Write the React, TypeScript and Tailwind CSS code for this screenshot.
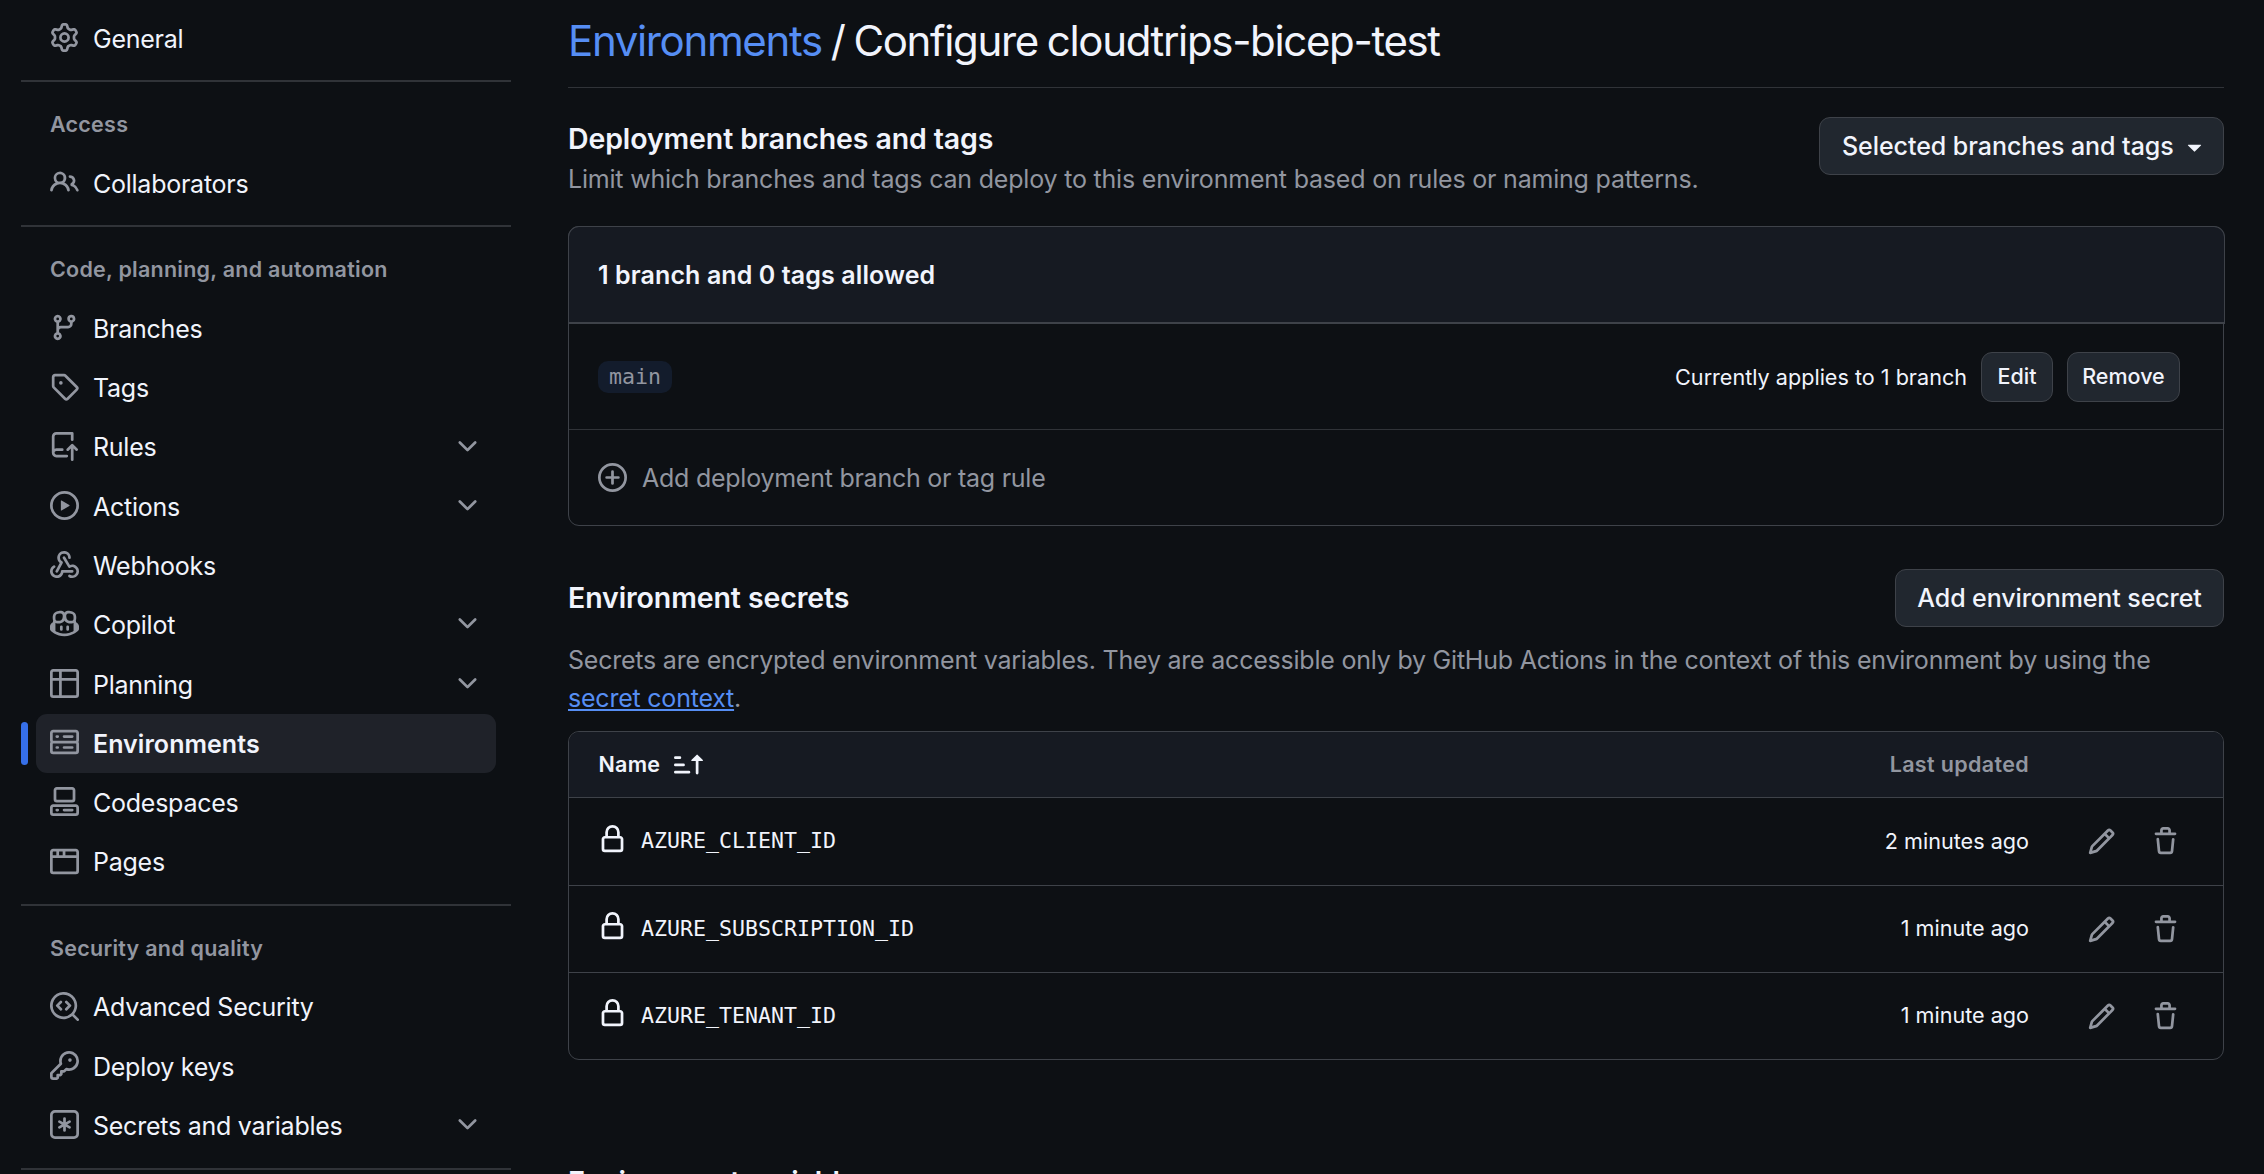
import type { ReactNode } from "react";
import clsx from "clsx";

// 16px glyphs, scaled up by the svg size
const icons = {
  gear: "M8 0a8.2 8.2 0 0 1 .701.031C9.444.095 9.99.645 10.16 1.29l.288 1.107c.018.066.079.158.212.224.231.114.454.243.668.386.123.082.233.09.299.071l1.103-.303c.644-.176 1.392.021 1.82.63.27.385.506.792.704 1.218.315.675.111 1.422-.364 1.891l-.814.806c-.049.048-.098.147-.088.294.016.257.016.515 0 .772-.01.147.038.246.088.294l.814.806c.475.469.679 1.216.364 1.891a7.977 7.977 0 0 1-.704 1.217c-.428.61-1.176.807-1.82.63l-1.102-.302c-.067-.019-.177-.011-.3.071a5.909 5.909 0 0 1-.668.386c-.133.066-.194.158-.211.224l-.29 1.106c-.168.646-.715 1.196-1.458 1.26a8.006 8.006 0 0 1-1.402 0c-.743-.064-1.289-.614-1.458-1.26l-.289-1.106c-.018-.066-.079-.158-.212-.224a5.738 5.738 0 0 1-.668-.386c-.123-.082-.233-.09-.299-.071l-1.103.303c-.644.176-1.392-.021-1.82-.63a8.12 8.12 0 0 1-.704-1.218c-.315-.675-.111-1.422.363-1.891l.815-.806c.05-.048.098-.147.088-.294a6.214 6.214 0 0 1 0-.772c.01-.147-.038-.246-.088-.294l-.815-.806C.635 6.045.431 5.298.746 4.623a7.92 7.92 0 0 1 .704-1.217c.428-.61 1.176-.807 1.82-.63l1.102.302c.067.019.177.011.3-.071.214-.143.437-.272.668-.386.133-.066.194-.158.211-.224l.29-1.106C6.009.645 6.556.095 7.299.03 7.53.01 7.764 0 8 0Zm-.571 1.525c-.036.003-.108.036-.137.146l-.289 1.105c-.147.561-.549.967-.998 1.189-.173.086-.34.183-.5.29-.417.278-.97.423-1.529.27l-1.103-.303c-.109-.03-.175.016-.195.045-.22.312-.412.644-.573.99-.014.031-.021.11.059.19l.815.806c.411.406.562.957.53 1.456a4.709 4.709 0 0 0 0 .582c.032.499-.119 1.05-.53 1.456l-.815.806c-.081.08-.073.159-.059.19.162.346.353.677.573.989.02.03.085.076.195.046l1.102-.303c.56-.153 1.113-.008 1.53.27.161.107.328.204.501.29.447.222.85.629.997 1.189l.289 1.105c.029.109.101.143.137.146a6.6 6.6 0 0 0 1.142 0c.036-.003.108-.036.137-.146l.289-1.105c.147-.561.549-.967.998-1.189.173-.086.34-.183.5-.29.417-.278.97-.423 1.529-.27l1.103.303c.109.029.175-.016.195-.045.22-.313.411-.644.573-.99.014-.031.021-.11-.059-.19l-.815-.806c-.411-.406-.562-.957-.53-1.456a4.709 4.709 0 0 0 0-.582c-.032-.499.119-1.05.53-1.456l.815-.806c.081-.08.073-.159.059-.19a6.464 6.464 0 0 0-.573-.989c-.02-.03-.085-.076-.195-.046l-1.102.303c-.56.153-1.113.008-1.53-.27a4.44 4.44 0 0 0-.501-.29c-.447-.222-.85-.629-.997-1.189l-.289-1.105c-.029-.11-.101-.143-.137-.146a6.6 6.6 0 0 0-1.142 0ZM11 8a3 3 0 1 1-6 0 3 3 0 0 1 6 0ZM9.5 8a1.5 1.5 0 1 0-3.001.001A1.5 1.5 0 0 0 9.5 8Z",
  people:
    "M2 5.5a3.5 3.5 0 1 1 5.898 2.549 5.508 5.508 0 0 1 3.034 4.084.75.75 0 1 1-1.482.235 4 4 0 0 0-7.9 0 .75.75 0 0 1-1.482-.236A5.507 5.507 0 0 1 3.102 8.05 3.493 3.493 0 0 1 2 5.5ZM11 4a3.001 3.001 0 0 1 2.22 5.018 5.01 5.01 0 0 1 2.56 3.012.749.749 0 0 1-.885.954.752.752 0 0 1-.549-.514 3.507 3.507 0 0 0-2.522-2.372.75.75 0 0 1-.574-.73v-.352a.75.75 0 0 1 .416-.672A1.5 1.5 0 0 0 11 5.5.75.75 0 0 1 11 4Zm-5.5-.5a2 2 0 1 0-.001 3.999A2 2 0 0 0 5.5 3.5Z",
  branch:
    "M9.5 3.25a2.25 2.25 0 1 1 3 2.122V6A2.5 2.5 0 0 1 10 8.5H6a1 1 0 0 0-1 1v1.128a2.251 2.251 0 1 1-1.5 0V5.372a2.25 2.25 0 1 1 1.5 0v1.836A2.493 2.493 0 0 1 6 7h4a1 1 0 0 0 1-1v-.628A2.25 2.25 0 0 1 9.5 3.25Zm-6 0a.75.75 0 1 0 1.5 0 .75.75 0 0 0-1.5 0Zm8.25-.75a.75.75 0 1 0 0 1.5.75.75 0 0 0 0-1.5ZM4.25 12a.75.75 0 1 0 0 1.5.75.75 0 0 0 0-1.5Z",
  tag: "M1 7.775V2.75C1 1.784 1.784 1 2.75 1h5.025c.464 0 .91.184 1.238.513l6.25 6.25a1.75 1.75 0 0 1 0 2.474l-5.026 5.026a1.75 1.75 0 0 1-2.474 0l-6.25-6.25A1.752 1.752 0 0 1 1 7.775Zm1.5 0c0 .066.026.13.073.177l6.25 6.25a.25.25 0 0 0 .354 0l5.025-5.025a.25.25 0 0 0 0-.354l-6.25-6.25a.25.25 0 0 0-.177-.073H2.75a.25.25 0 0 0-.25.25ZM6 5a1 1 0 1 1 0 2 1 1 0 0 1 0-2Z",
  repoPush:
    "M1 2.5A2.5 2.5 0 0 1 3.5 0h8.75a.75.75 0 0 1 .75.75v3.5a.75.75 0 0 1-1.5 0V1.5h-8a1 1 0 0 0-1 1v6.708A2.493 2.493 0 0 1 3.5 9h3.25a.75.75 0 0 1 0 1.5H3.5a1 1 0 0 0 0 2h5.75a.75.75 0 0 1 0 1.5H3.5A2.5 2.5 0 0 1 1 11.5Zm13.23 7.79h-.001l-1.224-1.224v6.184a.75.75 0 0 1-1.5 0V9.066L10.28 10.29a.75.75 0 0 1-1.06-1.061l2.505-2.504a.75.75 0 0 1 1.06 0L15.29 9.23a.751.751 0 0 1-.018 1.042.751.751 0 0 1-1.042.018Z",
  play: "M8 0a8 8 0 1 1 0 16A8 8 0 0 1 8 0ZM1.5 8a6.5 6.5 0 1 0 13 0 6.5 6.5 0 0 0-13 0Zm4.879-2.773 4.264 2.559a.25.25 0 0 1 0 .428l-4.264 2.559A.25.25 0 0 1 6 10.559V5.442a.25.25 0 0 1 .379-.215Z",
  webhook:
    "M5.5 4.25a2.25 2.25 0 0 1 4.5 0 .75.75 0 0 0 1.5 0 3.75 3.75 0 1 0-6.14 2.889l-2.272 4.258a.75.75 0 0 0 1.324.706L7 7.25a.75.75 0 0 0-.309-1.015A2.25 2.25 0 0 1 5.5 4.25Z M7.364 3.607a.75.75 0 0 1 1.03.257l2.608 4.349a3.75 3.75 0 1 1-.628 6.785.75.75 0 0 1 .752-1.299 2.25 2.25 0 1 0-.033-3.88.75.75 0 0 1-1.03-.256L7.107 4.636a.75.75 0 0 1 .257-1.03Z M2.9 8.776A.75.75 0 0 1 2.625 9.8 2.25 2.25 0 1 0 6 11.75a.75.75 0 0 1 .75-.751h5.5a.75.75 0 0 1 0 1.5H7.425a3.751 3.751 0 1 1-5.55-3.998.75.75 0 0 1 1.024.274Z",
  copilot:
    "M7.998 15.035c-4.562 0-7.873-2.914-7.998-3.749V9.338c.085-.628.677-1.686 1.588-2.065.013-.07.024-.143.036-.218.029-.183.06-.384.126-.612-.201-.508-.254-1.084-.254-1.656 0-.87.128-1.769.693-2.484.579-.733 1.494-1.124 2.724-1.261 1.206-.134 2.262.034 2.944.765.05.053.096.108.139.165.044-.057.094-.112.143-.165.682-.731 1.738-.899 2.944-.765 1.23.137 2.145.528 2.724 1.261.566.715.693 1.614.693 2.484 0 .572-.053 1.148-.254 1.656.066.228.098.429.126.612.012.076.024.148.037.218.924.385 1.522 1.471 1.591 2.095v1.872c0 .766-3.351 3.795-8.002 3.795Zm0-1.485c2.28 0 4.584-1.11 5.002-1.433V7.862l-.023-.116c-.49.21-1.075.291-1.727.291-1.146 0-2.059-.327-2.71-.991A3.222 3.222 0 0 1 8 6.303a3.24 3.24 0 0 1-.544.743c-.65.664-1.563.991-2.71.991-.652 0-1.236-.081-1.727-.291l-.023.116v4.255c.419.323 2.722 1.433 5.002 1.433ZM6.762 2.83c-.193-.206-.637-.413-1.682-.297-1.019.113-1.479.404-1.713.7-.247.312-.369.789-.369 1.554 0 .793.129 1.171.308 1.371.162.181.519.379 1.442.379.853 0 1.339-.235 1.638-.54.315-.322.527-.827.617-1.553.117-.935-.037-1.395-.241-1.614Zm4.155-.297c-1.044-.116-1.488.091-1.681.297-.204.219-.359.679-.242 1.614.091.726.303 1.231.618 1.553.299.305.784.54 1.638.54.922 0 1.28-.198 1.442-.379.179-.2.308-.578.308-1.371 0-.765-.123-1.242-.37-1.554-.233-.296-.693-.587-1.713-.7Z M6.25 9.037a.75.75 0 0 1 .75.75v1.501a.75.75 0 0 1-1.5 0V9.787a.75.75 0 0 1 .75-.75Zm4.25.75v1.501a.75.75 0 0 1-1.5 0V9.787a.75.75 0 0 1 1.5 0Z",
  table:
    "M0 1.75C0 .784.784 0 1.75 0h12.5C15.216 0 16 .784 16 1.75v12.5A1.75 1.75 0 0 1 14.25 16H1.75A1.75 1.75 0 0 1 0 14.25ZM6.5 6.5v8h7.75a.25.25 0 0 0 .25-.25V6.5Zm8-1.5V1.75a.25.25 0 0 0-.25-.25H6.5V5Zm-13 1.5v7.75c0 .138.112.25.25.25H5v-8ZM5 5V1.5H1.75a.25.25 0 0 0-.25.25V5Z",
  server:
    "M1.75 1h12.5c.966 0 1.75.784 1.75 1.75v4c0 .372-.116.717-.314 1 .198.283.314.628.314 1v4a1.75 1.75 0 0 1-1.75 1.75H1.75A1.75 1.75 0 0 1 0 12.75v-4c0-.358.109-.707.314-1a1.739 1.739 0 0 1-.314-1v-4C0 1.784.784 1 1.75 1ZM1.5 2.75v4c0 .138.112.25.25.25h12.5a.25.25 0 0 0 .25-.25v-4a.25.25 0 0 0-.25-.25H1.75a.25.25 0 0 0-.25.25Zm.25 5.75a.25.25 0 0 0-.25.25v4c0 .138.112.25.25.25h12.5a.25.25 0 0 0 .25-.25v-4a.25.25 0 0 0-.25-.25ZM7 4.75A.75.75 0 0 1 7.75 4h4.5a.75.75 0 0 1 0 1.5h-4.5A.75.75 0 0 1 7 4.75ZM7.75 10h4.5a.75.75 0 0 1 0 1.5h-4.5a.75.75 0 0 1 0-1.5ZM3 4.75A.75.75 0 0 1 3.75 4h.5a.75.75 0 0 1 0 1.5h-.5A.75.75 0 0 1 3 4.75ZM3.75 10h.5a.75.75 0 0 1 0 1.5h-.5a.75.75 0 0 1 0-1.5Z",
  codespaces:
    "M0 11.25c0-.966.784-1.75 1.75-1.75h12.5c.966 0 1.75.784 1.75 1.75v3A1.75 1.75 0 0 1 14.25 16H1.75A1.75 1.75 0 0 1 0 14.25Zm2-9.5C2 .784 2.784 0 3.75 0h8.5C13.216 0 14 .784 14 1.75v5a1.75 1.75 0 0 1-1.75 1.75h-8.5A1.75 1.75 0 0 1 2 6.75Zm1.75-.25a.25.25 0 0 0-.25.25v5c0 .138.112.25.25.25h8.5a.25.25 0 0 0 .25-.25v-5a.25.25 0 0 0-.25-.25Zm-2 9.5a.25.25 0 0 0-.25.25v3c0 .138.112.25.25.25h12.5a.25.25 0 0 0 .25-.25v-3a.25.25 0 0 0-.25-.25Z M7 12.75a.75.75 0 0 1 .75-.75h4.5a.75.75 0 0 1 0 1.5h-4.5a.75.75 0 0 1-.75-.75Zm-4 0a.75.75 0 0 1 .75-.75h.5a.75.75 0 0 1 0 1.5h-.5a.75.75 0 0 1-.75-.75Z",
  browser:
    "M0 2.75C0 1.784.784 1 1.75 1h12.5c.966 0 1.75.784 1.75 1.75v10.5A1.75 1.75 0 0 1 14.25 15H1.75A1.75 1.75 0 0 1 0 13.25ZM14.5 6h-13v7.25c0 .138.112.25.25.25h12.5a.25.25 0 0 0 .25-.25Zm-6-3.5v2h6V2.75a.25.25 0 0 0-.25-.25ZM5 2.5v2h2v-2Zm-3.25 0a.25.25 0 0 0-.25.25V4.5h2v-2Z",
  codescan:
    "M8.47 4.97a.75.75 0 0 0 0 1.06L9.94 7.5 8.47 8.97a.75.75 0 1 0 1.06 1.06l2-2a.75.75 0 0 0 0-1.06l-2-2a.75.75 0 0 0-1.06 0ZM6.53 6.03a.75.75 0 0 0-1.06-1.06l-2 2a.75.75 0 0 0 0 1.06l2 2a.75.75 0 1 0 1.06-1.06L5.06 7.5l1.47-1.47Z M12.246 13.307a7.501 7.501 0 1 1 1.06-1.06l2.474 2.473a.749.749 0 0 1-.326 1.275.749.749 0 0 1-.734-.215ZM1.5 7.5a6.002 6.002 0 0 0 3.608 5.504 6.002 6.002 0 0 0 6.486-1.117.748.748 0 0 1 .292-.293A6 6 0 1 0 1.5 7.5Z",
  key: "M10.5 0a5.499 5.499 0 1 1-1.288 10.848l-.932.932a.749.749 0 0 1-.53.22H7v.75a.749.749 0 0 1-.22.53l-.5.5a.749.749 0 0 1-.53.22H5v.75a.749.749 0 0 1-.22.53l-.5.5a.749.749 0 0 1-.53.22h-2A1.75 1.75 0 0 1 0 14.25v-2c0-.199.079-.389.22-.53l4.932-4.932A5.5 5.5 0 0 1 10.5 0Zm-4 5.5c-.001.431.069.86.205 1.269a.75.75 0 0 1-.181.768L1.5 12.56v1.69c0 .138.112.25.25.25h1.69l.06-.06v-1.19a.75.75 0 0 1 .75-.75h1.19l.06-.06v-1.19a.75.75 0 0 1 .75-.75h1.19l1.023-1.025a.75.75 0 0 1 .768-.18A4 4 0 1 0 6.5 5.5ZM11 6a1 1 0 1 1 0-2 1 1 0 0 1 0 2Z",
  asterisk:
    "M0 2.75A2.75 2.75 0 0 1 2.75 0h10.5A2.75 2.75 0 0 1 16 2.75v10.5A2.75 2.75 0 0 1 13.25 16H2.75A2.75 2.75 0 0 1 0 13.25ZM2.75 1.5c-.69 0-1.25.56-1.25 1.25v10.5c0 .69.56 1.25 1.25 1.25h10.5c.69 0 1.25-.56 1.25-1.25V2.75c0-.69-.56-1.25-1.25-1.25Z M8 4a.75.75 0 0 1 .75.75V6.7l1.69-.975a.75.75 0 0 1 .75 1.3L9.5 8l1.69.976a.75.75 0 0 1-.75 1.298L8.75 9.3v1.951a.75.75 0 0 1-1.5 0V9.299l-1.69.976a.75.75 0 0 1-.75-1.3L6.5 8l-1.69-.975a.75.75 0 0 1 .75-1.3l1.69.976V4.75A.75.75 0 0 1 8 4Z",
  chevron:
    "M12.78 5.22a.749.749 0 0 1 0 1.06l-4.25 4.25a.749.749 0 0 1-1.06 0L3.22 6.28a.749.749 0 1 1 1.06-1.06L8 8.939l3.72-3.719a.749.749 0 0 1 1.06 0Z",
  plus: "M8 0a8 8 0 1 1 0 16A8 8 0 0 1 8 0ZM1.5 8a6.5 6.5 0 1 0 13 0 6.5 6.5 0 0 0-13 0Zm7.25-3.25v2.5h2.5a.75.75 0 0 1 0 1.5h-2.5v2.5a.75.75 0 0 1-1.5 0v-2.5h-2.5a.75.75 0 0 1 0-1.5h2.5v-2.5a.75.75 0 0 1 1.5 0Z",
  lock: "M4 4a4 4 0 0 1 8 0v2h.25c.966 0 1.75.784 1.75 1.75v5.5A1.75 1.75 0 0 1 12.25 15h-8.5A1.75 1.75 0 0 1 2 13.25v-5.5C2 6.784 2.784 6 3.75 6H4Zm8.25 3.5h-8.5a.25.25 0 0 0-.25.25v5.5c0 .138.112.25.25.25h8.5a.25.25 0 0 0 .25-.25v-5.5a.25.25 0 0 0-.25-.25ZM10.5 6V4a2.5 2.5 0 1 0-5 0v2Z",
  pencil:
    "M11.013 1.427a1.75 1.75 0 0 1 2.474 0l1.086 1.086a1.75 1.75 0 0 1 0 2.474l-8.61 8.61c-.21.21-.47.364-.756.445l-3.251.93a.75.75 0 0 1-.927-.928l.929-3.25c.081-.286.235-.547.445-.758l8.61-8.61Zm.176 4.823L9.75 4.81l-6.286 6.287a.253.253 0 0 0-.064.108l-.558 1.953 1.953-.558a.253.253 0 0 0 .108-.064Zm1.238-3.763a.25.25 0 0 0-.354 0L10.811 3.75l1.439 1.44 1.263-1.263a.25.25 0 0 0 0-.354Z",
  trash:
    "M11 1.75V3h2.25a.75.75 0 0 1 0 1.5H2.75a.75.75 0 0 1 0-1.5H5V1.75C5 .784 5.784 0 6.75 0h2.5C10.216 0 11 .784 11 1.75ZM4.496 6.675l.66 6.6a.25.25 0 0 0 .249.225h5.19a.25.25 0 0 0 .249-.225l.66-6.6a.75.75 0 0 1 1.492.149l-.66 6.6A1.748 1.748 0 0 1 10.595 15h-5.19a1.75 1.75 0 0 1-1.741-1.575l-.66-6.6a.75.75 0 1 1 1.492-.15ZM6.5 1.75V3h3V1.75a.25.25 0 0 0-.25-.25h-2.5a.25.25 0 0 0-.25.25Z",
  caret:
    "m4.427 7.427 3.396 3.396a.25.25 0 0 0 .354 0l3.396-3.396A.25.25 0 0 0 11.396 7H4.604a.25.25 0 0 0-.177.427Z",
  sortAsc:
    "m12.927 2.573 3 3A.25.25 0 0 1 15.75 6H13.5v6.75a.75.75 0 0 1-1.5 0V6H9.75a.25.25 0 0 1-.177-.427l3-3a.25.25 0 0 1 .354 0ZM0 12.25a.75.75 0 0 1 .75-.75h7.5a.75.75 0 0 1 0 1.5H.75a.75.75 0 0 1-.75-.75Zm0-4a.75.75 0 0 1 .75-.75h4.5a.75.75 0 0 1 0 1.5H.75A.75.75 0 0 1 0 8.25Zm0-4a.75.75 0 0 1 .75-.75h2.5a.75.75 0 0 1 0 1.5H.75A.75.75 0 0 1 0 4.25Z",
};

type IconName = keyof typeof icons;

function Icon({ name, className }: { name: IconName; className?: string }) {
  return (
    <svg
      viewBox="0 0 16 16"
      fill="currentColor"
      aria-hidden="true"
      className={clsx("size-[29px] shrink-0", className)}
    >
      <path d={icons[name]} />
    </svg>
  );
}

type NavEntry = { label: string; icon: IconName; expandable?: boolean; active?: boolean };
type NavGroup = { title?: string; items: NavEntry[] };

const nav: NavGroup[] = [
  { items: [{ label: "General", icon: "gear" }] },
  { title: "Access", items: [{ label: "Collaborators", icon: "people" }] },
  {
    title: "Code, planning, and automation",
    items: [
      { label: "Branches", icon: "branch" },
      { label: "Tags", icon: "tag" },
      { label: "Rules", icon: "repoPush", expandable: true },
      { label: "Actions", icon: "play", expandable: true },
      { label: "Webhooks", icon: "webhook" },
      { label: "Copilot", icon: "copilot", expandable: true },
      { label: "Planning", icon: "table", expandable: true },
      { label: "Environments", icon: "server", active: true },
      { label: "Codespaces", icon: "codespaces" },
      { label: "Pages", icon: "browser" },
    ],
  },
  {
    title: "Security and quality",
    items: [
      { label: "Advanced Security", icon: "codescan" },
      { label: "Deploy keys", icon: "key" },
      { label: "Secrets and variables", icon: "asterisk", expandable: true },
    ],
  },
];

const secrets = [
  { name: "AZURE_CLIENT_ID", updated: "2 minutes ago" },
  { name: "AZURE_SUBSCRIPTION_ID", updated: "1 minute ago" },
  { name: "AZURE_TENANT_ID", updated: "1 minute ago" },
];

function NavItem({ label, icon, expandable, active }: NavEntry) {
  return (
    <li className="flex h-[59.3px] items-center">
      <span className={clsx("h-[43px] w-[7px] rounded-full", active && "bg-[#366fe8]")} />
      <a
        href="#"
        aria-current={active ? "page" : undefined}
        className={clsx(
          "ml-2 flex h-[59px] w-[460px] items-center rounded-[11px] px-[14px] text-[25px]",
          active ? "bg-[#1f2229] font-semibold tracking-[0.05px]" : "tracking-[-0.25px]",
        )}
      >
        <Icon name={icon} className="mb-[2px] text-[#9296a0]" />
        <span className="ml-[14px] flex-1 pt-[2px]">{label}</span>
        {expandable && <Icon name="chevron" className="mb-[2px] text-[#9296a0]" />}
      </a>
    </li>
  );
}

function Sidebar() {
  return (
    <nav aria-label="Settings" className="w-[490px] shrink-0 pt-[8.7px]">
      {nav.map((group, i) => (
        <div key={i} className="mb-[12.2px] border-b-2 border-[#303338] pb-[12.3px]">
          {group.title && (
            <h3 className="flex h-[59.3px] items-center pl-[29px] text-[21.5px] font-semibold tracking-[0.25px] text-[#9296a0]">
              {group.title}
            </h3>
          )}
          <ul>
            {group.items.map((item) => (
              <NavItem key={item.label} {...item} />
            ))}
          </ul>
        </div>
      ))}
    </nav>
  );
}

function Button({ className, children }: { className?: string; children: ReactNode }) {
  return (
    <button
      className={clsx(
        "flex shrink-0 items-center rounded-[11px] border border-[#3e4249] bg-[#21272f] font-medium",
        className,
      )}
    >
      {children}
    </button>
  );
}

function BranchPolicy() {
  return (
    <section>
      <div className="flex h-[138px] justify-between pt-[29px]">
        <div>
          <h2 className="text-[28.5px] leading-[44px] font-semibold tracking-[-0.12px]">
            Deployment branches and tags
          </h2>
          <p className="text-[25px] leading-[37px] tracking-[-0.2px] text-[#9296a0]">
            Limit which branches and tags can deploy to this environment based on rules or naming patterns.
          </p>
        </div>
        <Button className="h-[58px] w-[405px] justify-between pr-[14px] pl-[22px] text-[25px] tracking-[-0.05px]">
          <span className="pt-px">Selected branches and tags</span>
          <Icon name="caret" />
        </Button>
      </div>
      <div className="h-[300px] w-[1656px] rounded-[11px] border border-[#3e4249]">
        {/* header sits on top of the box border */}
        <div className="-mt-px -mr-[2px] -ml-px flex h-[98px] items-center rounded-t-[11px] border border-b-2 border-[#3e4249] bg-[#161a22] pt-[2px] pl-[29px] text-[25px] font-semibold tracking-[0.1px]">
          1 branch and 0 tags allowed
        </div>
        <div className="flex h-[106px] items-center border-b border-[#303338] pr-[43px] pl-[29px]">
          <span className="flex h-[32px] w-[74px] items-center justify-center rounded-[10px] bg-[#131c2c] pt-px font-['DejaVu_Sans_Mono',monospace] text-[21.6px] text-[#9296a0]">
            main
          </span>
          <span className="mr-[14px] ml-auto pt-[2px] text-[21.6px]">Currently applies to 1 branch</span>
          <Button className="mr-[14px] h-[50px] w-[72px] justify-center text-[21.5px]">Edit</Button>
          <Button className="h-[50px] w-[113px] justify-center text-[21.5px]">Remove</Button>
        </div>
        <a href="#" className="flex h-[95px] items-center pl-[29px] text-[25px] tracking-[-0.25px] text-[#9296a0]">
          <Icon name="plus" />
          <span className="ml-[15px] pt-[2px]">Add deployment branch or tag rule</span>
        </a>
      </div>
    </section>
  );
}

function EnvironmentSecrets() {
  return (
    <section className="pt-[43px]">
      <div className="flex h-[58px] items-center justify-between">
        <h2 className="text-[28.5px] font-semibold tracking-[-0.1px]">Environment secrets</h2>
        <Button className="h-[58px] w-[329px] justify-center pt-px text-[25px] tracking-[-0.1px]">
          Add environment secret
        </Button>
      </div>
      <p className="pt-[15px] text-[25px] leading-[37.5px] tracking-[-0.22px] whitespace-nowrap text-[#9296a0]">
        Secrets are encrypted environment variables. They are accessible only by GitHub Actions in the context of this
        environment by using the
        <br />
        <a href="#" className="text-[#568ef4] underline">
          secret context
        </a>
        .
      </p>
      <div className="mt-[14px] w-[1656px] rounded-[11px] border border-[#3e4249]">
        <div className="flex h-[65px] items-center rounded-t-[10px] bg-[#161a22] pr-[194px] pl-[29.5px] text-[21.5px] font-semibold tracking-[0.25px]">
          Name
          <Icon name="sortAsc" className="ml-[13.5px]" />
          <span className="ml-auto tracking-[0.35px] text-[#9296a0]">Last updated</span>
        </div>
        {secrets.map((secret) => (
          <div
            key={secret.name}
            className="flex h-[87px] items-center border-t border-[#3e4249] pr-[43px] pl-[29px] nth-2:h-[88px]"
          >
            <Icon name="lock" className="mb-[5px]" />
            <span className="ml-[14px] font-['DejaVu_Sans_Mono',monospace] text-[21.6px]">{secret.name}</span>
            <span className="mr-[58px] ml-auto pb-px text-[21.6px]">{secret.updated}</span>
            <Icon name="pencil" className="mr-[35px] text-[#9296a0]" />
            <Icon name="trash" className="text-[#9296a0]" />
          </div>
        ))}
      </div>
    </section>
  );
}

export default function App() {
  return (
    <div className="flex h-[1174px] w-[2264px] overflow-hidden bg-[#0d1014] pl-[21px] font-['Inter',sans-serif] text-[#f1f4fc]">
      <Sidebar />
      <main className="ml-[57px] w-[1656px]">
        <h1 className="flex h-[88px] items-center border-b border-[#303338] pb-[6px] text-[42px] tracking-[-1.35px] [word-spacing:-1.5px] whitespace-pre">
          <a href="#" className="text-[#568ef4]">
            Environments
          </a>
          {" / Configure cloudtrips-bicep-test"}
        </h1>
        <BranchPolicy />
        <EnvironmentSecrets />
        <h2 className="pt-[100px] text-[28.5px] leading-[44px] font-semibold tracking-[-0.15px]">
          Environment variables
        </h2>
      </main>
    </div>
  );
}
